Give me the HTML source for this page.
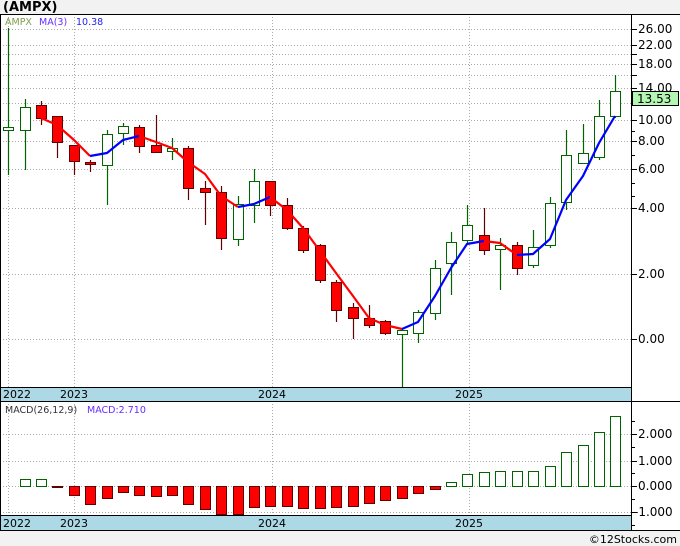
<!DOCTYPE html>
<html><head><meta charset="utf-8"><style>
html,body{margin:0;padding:0;background:#f2f2f2;}
body{width:680px;height:546px;overflow:hidden;font-family:"Liberation Sans",sans-serif;}
svg{display:block}
text{font-family:"DejaVu Sans","Liberation Sans",sans-serif;}
</style></head><body>
<svg width="680" height="546" viewBox="0 0 680 546" xmlns="http://www.w3.org/2000/svg">
<rect x="0" y="0" width="680" height="546" fill="#f2f2f2"/>
<text x="3" y="11" font-size="13" font-weight="bold" fill="#000" font-family="Liberation Sans,sans-serif">(AMPX)</text>
<rect x="0" y="14" width="680" height="516" fill="#fff"/>
<g stroke="#aaa" stroke-dasharray="1,2" stroke-width="1">
<line x1="0" y1="29.5" x2="631" y2="29.5"/><line x1="0" y1="45.5" x2="631" y2="45.5"/><line x1="0" y1="54.5" x2="631" y2="54.5"/><line x1="0" y1="64.5" x2="631" y2="64.5"/><line x1="0" y1="75.5" x2="631" y2="75.5"/><line x1="0" y1="88.5" x2="631" y2="88.5"/><line x1="0" y1="103.5" x2="631" y2="103.5"/><line x1="0" y1="120.5" x2="631" y2="120.5"/><line x1="0" y1="141.5" x2="631" y2="141.5"/><line x1="0" y1="169.5" x2="631" y2="169.5"/><line x1="0" y1="208.5" x2="631" y2="208.5"/><line x1="0" y1="274.5" x2="631" y2="274.5"/><line x1="0" y1="339.5" x2="631" y2="339.5"/>
<line x1="8.5" y1="14" x2="8.5" y2="387"/><line x1="74.5" y1="14" x2="74.5" y2="387"/><line x1="272.5" y1="14" x2="272.5" y2="387"/><line x1="469.5" y1="14" x2="469.5" y2="387"/>
<line x1="0" y1="434.5" x2="631" y2="434.5"/><line x1="0" y1="461.5" x2="631" y2="461.5"/><line x1="0" y1="486.5" x2="631" y2="486.5"/><line x1="0" y1="512.5" x2="631" y2="512.5"/>
<line x1="8.5" y1="401" x2="8.5" y2="515"/><line x1="74.5" y1="401" x2="74.5" y2="515"/><line x1="272.5" y1="401" x2="272.5" y2="515"/><line x1="469.5" y1="401" x2="469.5" y2="515"/>
</g>
<!-- wicks -->
<g stroke-width="1.2">
<g stroke="#006400">
<line x1="8.5" y1="28" x2="8.5" y2="175"/><line x1="25.5" y1="99" x2="25.5" y2="170"/><line x1="107.5" y1="130" x2="107.5" y2="205"/><line x1="123.5" y1="123" x2="123.5" y2="145"/><line x1="172.5" y1="138" x2="172.5" y2="160"/><line x1="238.5" y1="196" x2="238.5" y2="246"/><line x1="254.5" y1="169" x2="254.5" y2="223"/><line x1="402.5" y1="328" x2="402.5" y2="387"/><line x1="418.5" y1="310" x2="418.5" y2="343"/><line x1="435.5" y1="260" x2="435.5" y2="320"/><line x1="451.5" y1="232" x2="451.5" y2="295"/><line x1="467.5" y1="205" x2="467.5" y2="245"/><line x1="500.5" y1="238" x2="500.5" y2="290"/><line x1="533.5" y1="230" x2="533.5" y2="268"/><line x1="550.5" y1="197" x2="550.5" y2="248"/><line x1="566.5" y1="130" x2="566.5" y2="210"/><line x1="583.5" y1="124" x2="583.5" y2="163"/><line x1="599.5" y1="100" x2="599.5" y2="160"/><line x1="615.5" y1="75" x2="615.5" y2="118"/>
</g>
<g stroke="#600000">
<line x1="41.5" y1="101" x2="41.5" y2="125"/><line x1="57.5" y1="116" x2="57.5" y2="158"/><line x1="74.5" y1="145" x2="74.5" y2="175"/><line x1="90.5" y1="160" x2="90.5" y2="172"/><line x1="139.5" y1="125" x2="139.5" y2="153"/><line x1="156.5" y1="115" x2="156.5" y2="152"/><line x1="188.5" y1="146" x2="188.5" y2="200"/><line x1="205.5" y1="181" x2="205.5" y2="225"/><line x1="221.5" y1="186" x2="221.5" y2="250"/><line x1="270.5" y1="181" x2="270.5" y2="216"/><line x1="287.5" y1="198" x2="287.5" y2="230"/><line x1="303.5" y1="226" x2="303.5" y2="253"/><line x1="320.5" y1="244" x2="320.5" y2="283"/><line x1="336.5" y1="280" x2="336.5" y2="322"/><line x1="353.5" y1="303" x2="353.5" y2="339"/><line x1="369.5" y1="305" x2="369.5" y2="328"/><line x1="385.5" y1="320" x2="385.5" y2="335"/><line x1="484.5" y1="208" x2="484.5" y2="255"/><line x1="517.5" y1="242" x2="517.5" y2="275"/>
</g></g>
<!-- bodies -->
<g fill="#fff" stroke="#006400" stroke-width="1">
<rect x="3.5" y="127.5" width="10" height="3"/><rect x="20.5" y="107.5" width="10" height="23"/><rect x="102.5" y="134.5" width="10" height="31"/><rect x="118.5" y="126.5" width="10" height="7"/><rect x="167.5" y="148.5" width="10" height="3"/><rect x="233.5" y="204.5" width="10" height="35"/><rect x="249.5" y="181.5" width="10" height="24"/><rect x="397.5" y="330.5" width="10" height="4"/><rect x="413.5" y="312.5" width="10" height="21"/><rect x="430.5" y="268.5" width="10" height="45"/><rect x="446.5" y="242.5" width="10" height="21"/><rect x="462.5" y="225.5" width="10" height="15"/><rect x="495.5" y="245.5" width="10" height="4"/><rect x="528.5" y="247.5" width="10" height="18"/><rect x="545.5" y="203.5" width="10" height="42"/><rect x="561.5" y="155.5" width="10" height="47"/><rect x="578.5" y="153.5" width="10" height="10"/><rect x="594.5" y="116.5" width="10" height="41"/><rect x="610.5" y="91.5" width="10" height="25"/>
</g>
<g fill="#f00" stroke="#600000" stroke-width="1">
<rect x="36.5" y="105.5" width="10" height="13"/><rect x="52.5" y="116.5" width="10" height="26"/><rect x="69.5" y="145.5" width="10" height="16"/><rect x="85.5" y="162.5" width="10" height="2"/><rect x="134.5" y="127.5" width="10" height="19"/><rect x="151.5" y="145.5" width="10" height="7"/><rect x="183.5" y="148.5" width="10" height="40"/><rect x="200.5" y="188.5" width="10" height="4"/><rect x="216.5" y="192.5" width="10" height="46"/><rect x="265.5" y="181.5" width="10" height="24"/><rect x="282.5" y="205.5" width="10" height="23"/><rect x="298.5" y="228.5" width="10" height="22"/><rect x="315.5" y="245.5" width="10" height="35"/><rect x="331.5" y="282.5" width="10" height="28"/><rect x="348.5" y="307.5" width="10" height="11"/><rect x="364.5" y="318.5" width="10" height="7"/><rect x="380.5" y="321.5" width="10" height="12"/><rect x="479.5" y="235.5" width="10" height="15"/><rect x="512.5" y="245.5" width="10" height="23"/>
</g>
<!-- MA -->
<g fill="none" stroke-width="2.2" stroke-linejoin="round">
<polyline stroke="#f00" points="41,118 57,125 74,140 90,156"/>
<polyline stroke="#00f" points="90,156 107,153 123,140 139,136"/>
<polyline stroke="#f00" points="139,136 156,142 172,148 188,162 205,174 221,196 238,207"/>
<polyline stroke="#00f" points="238,207 254,204 270,197"/>
<polyline stroke="#f00" points="270,197 287,210 303,228 320,251 336,273 353,296 369,318 385,325 402,329"/>
<polyline stroke="#00f" points="402,329 418,322 435,296 451,268 467,244 484,241"/>
<polyline stroke="#f00" points="484,241 500,243 517,255"/>
<polyline stroke="#00f" points="517,255 533,254 550,239 566,200 583,176 599,143 615,116"/>
</g>
<!-- MACD bars -->
<g fill="#fff" stroke="#006400">
<rect x="20.5" y="479.5" width="10" height="7"/><rect x="36.5" y="479.5" width="10" height="7"/><rect x="446.5" y="482.5" width="10" height="4"/><rect x="462.5" y="474.5" width="10" height="12"/><rect x="479.5" y="472.5" width="10" height="14"/><rect x="495.5" y="471.5" width="10" height="15"/><rect x="512.5" y="471.5" width="10" height="15"/><rect x="528.5" y="471.5" width="10" height="15"/><rect x="545.5" y="466.5" width="10" height="20"/><rect x="561.5" y="452.5" width="10" height="34"/><rect x="578.5" y="445.5" width="10" height="41"/><rect x="594.5" y="432.5" width="10" height="54"/><rect x="610.5" y="416.5" width="10" height="70"/>
</g>
<g fill="#f00" stroke="#600000">
<rect x="52.5" y="486.5" width="10" height="1"/><rect x="69.5" y="486.5" width="10" height="9"/><rect x="85.5" y="486.5" width="10" height="18"/><rect x="102.5" y="486.5" width="10" height="12"/><rect x="118.5" y="486.5" width="10" height="6"/><rect x="134.5" y="486.5" width="10" height="9"/><rect x="151.5" y="486.5" width="10" height="10"/><rect x="167.5" y="486.5" width="10" height="9"/><rect x="183.5" y="486.5" width="10" height="18"/><rect x="200.5" y="486.5" width="10" height="23"/><rect x="216.5" y="486.5" width="10" height="28"/><rect x="233.5" y="486.5" width="10" height="28"/><rect x="249.5" y="486.5" width="10" height="21"/><rect x="265.5" y="486.5" width="10" height="20"/><rect x="282.5" y="486.5" width="10" height="20"/><rect x="298.5" y="486.5" width="10" height="22"/><rect x="315.5" y="486.5" width="10" height="22"/><rect x="331.5" y="486.5" width="10" height="21"/><rect x="348.5" y="486.5" width="10" height="20"/><rect x="364.5" y="486.5" width="10" height="17"/><rect x="380.5" y="486.5" width="10" height="14"/><rect x="397.5" y="486.5" width="10" height="12"/><rect x="413.5" y="486.5" width="10" height="7"/><rect x="430.5" y="486.5" width="10" height="3"/>
</g>
<!-- date bars -->
<rect x="0" y="387" width="631" height="14" fill="#add8e6"/>
<rect x="0" y="515" width="631" height="15" fill="#add8e6"/>
<g stroke="#000" stroke-width="1" fill="none">
<line x1="0" y1="14.5" x2="680" y2="14.5"/>
<line x1="0" y1="387.5" x2="631" y2="387.5"/>
<line x1="0" y1="401.5" x2="680" y2="401.5"/>
<line x1="0" y1="515.5" x2="631" y2="515.5"/>
<line x1="0" y1="530.5" x2="680" y2="530.5"/>
<line x1="631.5" y1="14" x2="631.5" y2="530"/>
<line x1="0.5" y1="14" x2="0.5" y2="530"/>
</g>
<g stroke="#000">
<line x1="631" y1="29.5" x2="637" y2="29.5"/><line x1="631" y1="45.5" x2="637" y2="45.5"/><line x1="631" y1="54.5" x2="637" y2="54.5"/><line x1="631" y1="64.5" x2="637" y2="64.5"/><line x1="631" y1="75.5" x2="637" y2="75.5"/><line x1="631" y1="88.5" x2="637" y2="88.5"/><line x1="631" y1="103.5" x2="637" y2="103.5"/><line x1="631" y1="120.5" x2="637" y2="120.5"/><line x1="631" y1="131.5" x2="635" y2="131.5"/><line x1="631" y1="141.5" x2="637" y2="141.5"/><line x1="631" y1="155.5" x2="635" y2="155.5"/><line x1="631" y1="169.5" x2="637" y2="169.5"/><line x1="631" y1="183.5" x2="635" y2="183.5"/><line x1="631" y1="196.5" x2="635" y2="196.5"/><line x1="631" y1="208.5" x2="637" y2="208.5"/><line x1="631" y1="274.5" x2="637" y2="274.5"/><line x1="631" y1="339.5" x2="637" y2="339.5"/>
<line x1="631" y1="421.5" x2="635" y2="421.5"/><line x1="631" y1="434.5" x2="637" y2="434.5"/><line x1="631" y1="447.5" x2="635" y2="447.5"/><line x1="631" y1="461.5" x2="637" y2="461.5"/><line x1="631" y1="473.5" x2="635" y2="473.5"/><line x1="631" y1="486.5" x2="637" y2="486.5"/><line x1="631" y1="499.5" x2="635" y2="499.5"/><line x1="631" y1="512.5" x2="637" y2="512.5"/><line x1="631" y1="525.5" x2="635" y2="525.5"/>
</g>
<g font-size="12" fill="#000">
<text x="638" y="33">26.00</text><text x="638" y="49">22.00</text><text x="638" y="68">18.00</text><text x="638" y="92">14.00</text><text x="638" y="124">10.00</text><text x="638" y="145">8.00</text><text x="638" y="173">6.00</text><text x="638" y="212">4.00</text><text x="638" y="278">2.00</text><text x="638" y="343">0.00</text>
<text x="638" y="438">2.000</text><text x="638" y="465">1.000</text><text x="638" y="490">0.000</text><text x="634" y="516">-1.000</text>
</g>
<rect x="632.5" y="91.5" width="46" height="14" fill="#b3f7b3" stroke="#000"/>
<text x="637" y="103" font-size="12" fill="#000">13.53</text>
<g font-size="11" fill="#000">
<text x="3" y="398">2022</text><text x="60" y="398">2023</text><text x="258" y="398">2024</text><text x="455" y="398">2025</text>
<text x="3" y="527">2022</text><text x="60" y="527">2023</text><text x="258" y="527">2024</text><text x="455" y="527">2025</text>
</g>
<text x="5" y="25" font-size="9.5" fill="#7f9f4f">AMPX</text>
<text x="39" y="25" font-size="9.5" fill="#6a2cff">MA(3)</text>
<text x="76" y="25" font-size="9.5" fill="#2222ee">10.38</text>
<text x="5" y="413" font-size="9.5" fill="#333">MACD(26,12,9)</text>
<text x="87" y="413" font-size="9.5" fill="#6a2cff">MACD:2.710</text>
<text x="677" y="543" font-size="11" fill="#000" text-anchor="end">©12Stocks.com</text>
</svg>
</body></html>
